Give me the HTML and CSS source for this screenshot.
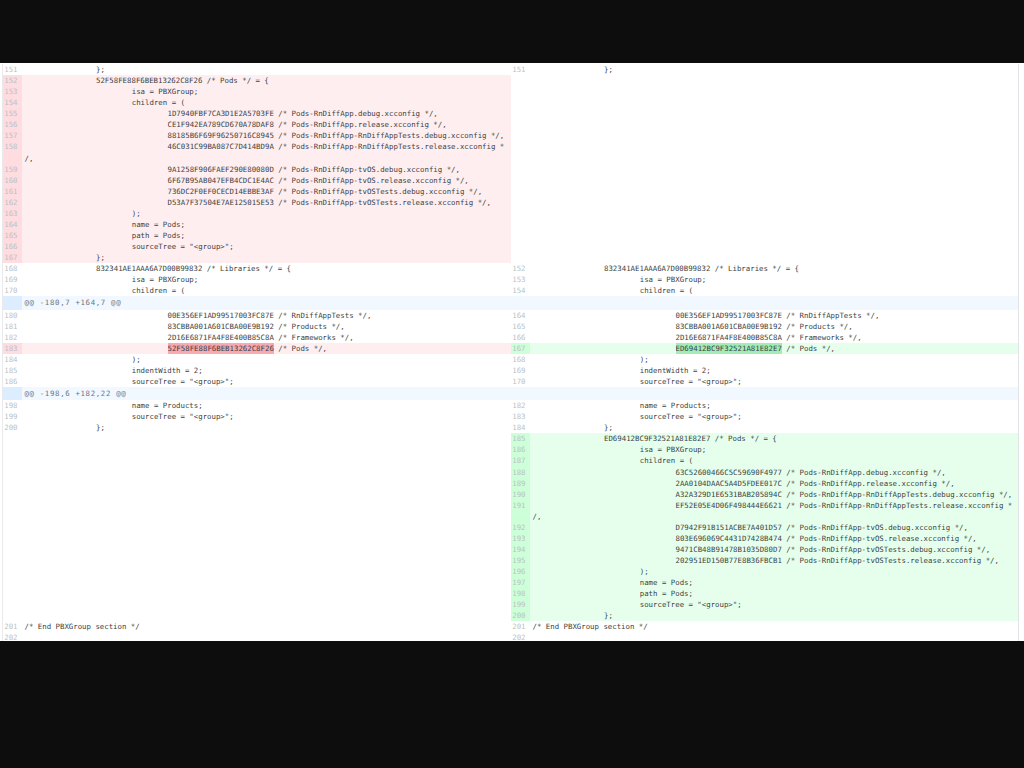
FILE: index.html
```html
<!DOCTYPE html>
<html lang="en">
<head>
<meta charset="utf-8">
<title>Diff</title>
<link rel="stylesheet" href="styles.css">
</head>
<body>
<main class="diff">
<table class="tbl">
<colgroup><col class="cn"><col class="cc"><col class="cn"><col class="cc"></colgroup>
<tbody>
<tr><td class="n">151</td><td class="c">		};</td><td class="n">151</td><td class="c">		};</td></tr>
<tr><td class="n del">152</td><td class="c del">		52F58FE88F6BEB13262C8F26 /* Pods */ = {</td><td class="e" colspan="2" rowspan="16"></td></tr>
<tr><td class="n del">153</td><td class="c del">			isa = PBXGroup;</td></tr>
<tr><td class="n del">154</td><td class="c del">			children = (</td></tr>
<tr><td class="n del">155</td><td class="c del">				1D7940FBF7CA3D1E2A5703FE /* Pods-RnDiffApp.debug.xcconfig */,</td></tr>
<tr><td class="n del">156</td><td class="c del">				CE1F942EA789CD670A78DAF8 /* Pods-RnDiffApp.release.xcconfig */,</td></tr>
<tr><td class="n del">157</td><td class="c del">				88185B6F69F96250716C8945 /* Pods-RnDiffApp-RnDiffAppTests.debug.xcconfig */,</td></tr>
<tr><td class="n del">158<br>&nbsp;</td><td class="c del">				46C031C99BA087C7D414BD9A /* Pods-RnDiffApp-RnDiffAppTests.release.xcconfig *<br>/,</td></tr>
<tr><td class="n del">159</td><td class="c del">				9A1258F906FAEF290E80080D /* Pods-RnDiffApp-tvOS.debug.xcconfig */,</td></tr>
<tr><td class="n del">160</td><td class="c del">				6F67B95AB047EFB4CDC1E4AC /* Pods-RnDiffApp-tvOS.release.xcconfig */,</td></tr>
<tr><td class="n del">161</td><td class="c del">				736DC2F0EF0CECD14EBBE3AF /* Pods-RnDiffApp-tvOSTests.debug.xcconfig */,</td></tr>
<tr><td class="n del">162</td><td class="c del">				D53A7F37504E7AE125015E53 /* Pods-RnDiffApp-tvOSTests.release.xcconfig */,</td></tr>
<tr><td class="n del">163</td><td class="c del">			);</td></tr>
<tr><td class="n del">164</td><td class="c del">			name = Pods;</td></tr>
<tr><td class="n del">165</td><td class="c del">			path = Pods;</td></tr>
<tr><td class="n del">166</td><td class="c del">			sourceTree = "&lt;group&gt;";</td></tr>
<tr><td class="n del">167</td><td class="c del">		};</td></tr>
<tr><td class="n">168</td><td class="c">		832341AE1AAA6A7D00B99832 /* Libraries */ = {</td><td class="n">152</td><td class="c">		832341AE1AAA6A7D00B99832 /* Libraries */ = {</td></tr>
<tr><td class="n">169</td><td class="c">			isa = PBXGroup;</td><td class="n">153</td><td class="c">			isa = PBXGroup;</td></tr>
<tr><td class="n">170</td><td class="c">			children = (</td><td class="n">154</td><td class="c">			children = (</td></tr>
<tr class="hunk"><td class="n hn"></td><td class="c hc" colspan="3">@@ -180,7 +164,7 @@</td></tr>
<tr><td class="n">180</td><td class="c">				00E356EF1AD99517003FC87E /* RnDiffAppTests */,</td><td class="n">164</td><td class="c">				00E356EF1AD99517003FC87E /* RnDiffAppTests */,</td></tr>
<tr><td class="n">181</td><td class="c">				83CBBA001A601CBA00E9B192 /* Products */,</td><td class="n">165</td><td class="c">				83CBBA001A601CBA00E9B192 /* Products */,</td></tr>
<tr><td class="n">182</td><td class="c">				2D16E6871FA4F8E400B85C8A /* Frameworks */,</td><td class="n">166</td><td class="c">				2D16E6871FA4F8E400B85C8A /* Frameworks */,</td></tr>
<tr><td class="n del">183</td><td class="c del">				<mark class="mdel">52F58FE88F6BEB13262C8F26</mark> /* Pods */,</td><td class="n add">167</td><td class="c add">				<mark class="madd">ED69412BC9F32521A81E82E7</mark> /* Pods */,</td></tr>
<tr><td class="n">184</td><td class="c">			);</td><td class="n">168</td><td class="c">			);</td></tr>
<tr><td class="n">185</td><td class="c">			indentWidth = 2;</td><td class="n">169</td><td class="c">			indentWidth = 2;</td></tr>
<tr><td class="n">186</td><td class="c">			sourceTree = "&lt;group&gt;";</td><td class="n">170</td><td class="c">			sourceTree = "&lt;group&gt;";</td></tr>
<tr class="hunk"><td class="n hn"></td><td class="c hc" colspan="3">@@ -198,6 +182,22 @@</td></tr>
<tr><td class="n">198</td><td class="c">			name = Products;</td><td class="n">182</td><td class="c">			name = Products;</td></tr>
<tr><td class="n">199</td><td class="c">			sourceTree = "&lt;group&gt;";</td><td class="n">183</td><td class="c">			sourceTree = "&lt;group&gt;";</td></tr>
<tr><td class="n">200</td><td class="c">		};</td><td class="n">184</td><td class="c">		};</td></tr>
<tr><td class="e" colspan="2" rowspan="16"></td><td class="n add">185</td><td class="c add">		ED69412BC9F32521A81E82E7 /* Pods */ = {</td></tr>
<tr><td class="n add">186</td><td class="c add">			isa = PBXGroup;</td></tr>
<tr><td class="n add">187</td><td class="c add">			children = (</td></tr>
<tr><td class="n add">188</td><td class="c add">				63C52600466C5C59690F4977 /* Pods-RnDiffApp.debug.xcconfig */,</td></tr>
<tr><td class="n add">189</td><td class="c add">				2AA0104DAAC5A4D5FDEE017C /* Pods-RnDiffApp.release.xcconfig */,</td></tr>
<tr><td class="n add">190</td><td class="c add">				A32A329D1E6531BAB205894C /* Pods-RnDiffApp-RnDiffAppTests.debug.xcconfig */,</td></tr>
<tr><td class="n add">191<br>&nbsp;</td><td class="c add">				EF52E05E4D06F498444E6621 /* Pods-RnDiffApp-RnDiffAppTests.release.xcconfig *<br>/,</td></tr>
<tr><td class="n add">192</td><td class="c add">				D7942F91B151ACBE7A401D57 /* Pods-RnDiffApp-tvOS.debug.xcconfig */,</td></tr>
<tr><td class="n add">193</td><td class="c add">				803E696069C4431D7428B474 /* Pods-RnDiffApp-tvOS.release.xcconfig */,</td></tr>
<tr><td class="n add">194</td><td class="c add">				9471CB48B91478B1035D80D7 /* Pods-RnDiffApp-tvOSTests.debug.xcconfig */,</td></tr>
<tr><td class="n add">195</td><td class="c add">				202951ED150B77E8B36FBCB1 /* Pods-RnDiffApp-tvOSTests.release.xcconfig */,</td></tr>
<tr><td class="n add">196</td><td class="c add">			);</td></tr>
<tr><td class="n add">197</td><td class="c add">			name = Pods;</td></tr>
<tr><td class="n add">198</td><td class="c add">			path = Pods;</td></tr>
<tr><td class="n add">199</td><td class="c add">			sourceTree = "&lt;group&gt;";</td></tr>
<tr><td class="n add">200</td><td class="c add">		};</td></tr>
<tr><td class="n">201</td><td class="c">/* End PBXGroup section */</td><td class="n">201</td><td class="c">/* End PBXGroup section */</td></tr>
<tr><td class="n">202</td><td class="c"></td><td class="n">202</td><td class="c"></td></tr>
</tbody>
</table>
</main>
</body>
</html>
```
FILE: styles.css
```css
html, body { margin: 0; padding: 0; background: #0d0d0d; height: 768px; overflow: hidden; }
.diff { margin-top: 63px; height: 578px; box-sizing: border-box; background: #fff; padding: 1px 4px 0 2px; overflow: hidden; }
.tbl { border-collapse: collapse; table-layout: fixed; width: 1017px; border-left: 1px solid #e8eaed; border-right: 1px solid #e1e4e8; font-family: "DejaVu Sans Mono", monospace; font-size: 7.37px; line-height: 11.07px; color: #3a3f44; }
.cn { width: 19px; }
.cc { width: 489px; }
td { padding: 0; vertical-align: top; height: 11.07px; }
.n { color: #bcbfc3; text-align: right; padding-right: 4px; box-sizing: border-box; }
.c { white-space: pre-wrap; tab-size: 35.75px; padding-left: 3px; box-sizing: border-box; }
.n.del { background: #ffdce0; }
.c.del { background: #ffeef0; }
.n.add { background: #cdffd8; }
.c.add { background: #e6ffed; }
.n.hn { background: #dbedff; }
.c.hc { background: #f1f8ff; color: #6a737d; letter-spacing: 0.66px; }
.hunk td { height: 13.2px; line-height: 13.2px; }
mark { color: inherit; display: inline-block; height: 11.07px; line-height: 11.07px; vertical-align: top; }
.mdel { background: #f8a9b1; }
.madd { background: #a3ecb6; }
.e { background: #fff; }
```
